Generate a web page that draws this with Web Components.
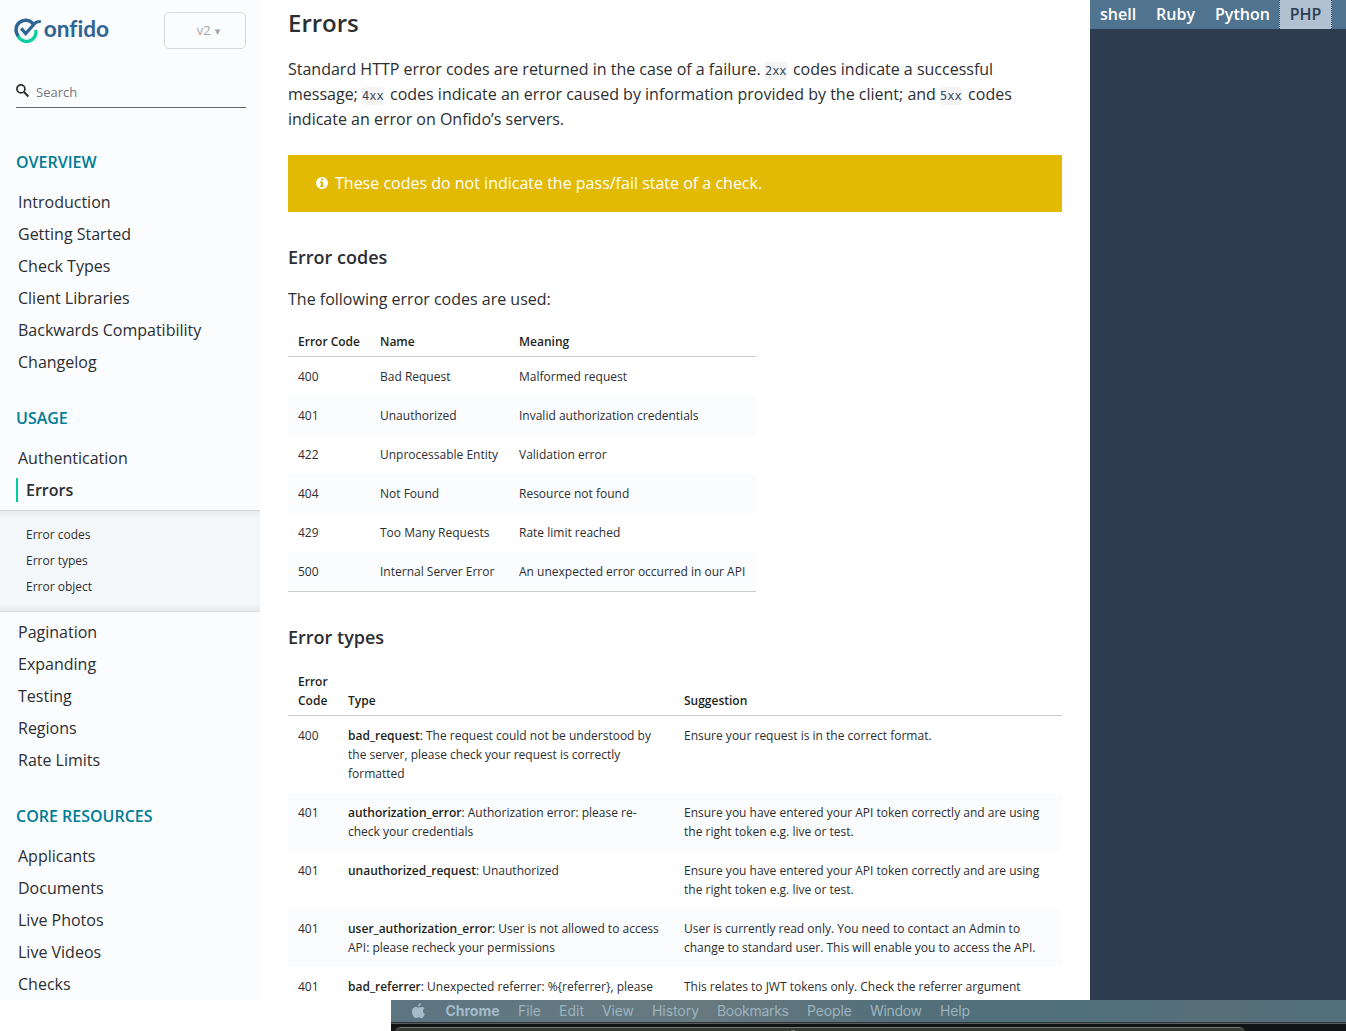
<!DOCTYPE html>
<html lang="en"><head><meta charset="utf-8"><title>Onfido API</title>
<style>
html,body{margin:0;height:1031px;overflow:hidden;background:#fff}
body{font-family:"Open Sans",sans-serif;color:#2c2e31}
</style></head><body>
<api-docs></api-docs>
<script>
const define=(name,html,after)=>customElements.define(name,class extends HTMLElement{
  constructor(){super();this.attachShadow({mode:'open'});}
  connectedCallback(){this.shadowRoot.innerHTML=typeof html==='function'?html(this):html;if(after)after(this);}
});

define('brand-logo',`<style>:host{display:block;width:100px;height:32px}svg{display:block;overflow:visible}</style>
<svg width="100" height="32" viewBox="0 0 100 32"><g fill="none" stroke-width="3.400">
<path d="M3.500 19A9.500 9.500 0 0 0 21.800 14" stroke="#0bcda2"/>
<path d="M18.900 7.700A9.500 9.500 0 1 0 4.200 19.800" stroke="#2f6592"/>
<path d="M7.200 12.400l4.500 5.200L21 7.100Q22.600 5.500 26.800 5.500" stroke="#2f6592" stroke-width="3.200"/></g>
<text x="29.700" y="21" textLength="65.300" lengthAdjust="spacingAndGlyphs" font-family="Lato" font-weight="700" font-size="22" fill="#2f6592" style="font-variant-ligatures:none;line-height:30px">onfido</text></svg>`);

define('version-picker',`<style>:host{display:flex;box-sizing:border-box;width:82px;height:37px;border:1px solid #d9dadd;border-radius:5px;align-items:center;justify-content:center;color:#a5a8ab;font-size:13px;padding:0 0 1px 7px}span{font:11px "DejaVu Sans";margin:2px 0 0 4px}</style><slot></slot><span>▾</span>`);

define('search-field',`<style>:host{display:flex;box-sizing:border-box;width:230px;height:34px;margin:25px 0 0 16px;border-bottom:1px solid #626468;color:#737679;font-size:13px;line-height:18px;padding-top:9px}svg{flex:none;margin:1px 6px 0 0}</style>
<svg width="14" height="14" viewBox="0 0 14 14" fill="none" stroke="#2c2e31"><circle cx="4.9" cy="4.9" r="4" stroke-width="1.7"/><path d="M8 8l4.400 4.400" stroke-width="2.100"/></svg><slot></slot>`);

define('nav-heading',`<style>:host{display:block;box-sizing:border-box;height:64px;padding:28px 0 0 16px;line-height:24px;font-size:16px;font-weight:600;color:#007c95;white-space:nowrap}</style><slot></slot>`);
define('nav-item',`<style>:host{display:block;height:32px;line-height:32px;padding-left:18px;font-size:16px;white-space:nowrap}
:host([active]){padding:4px 0 4px 16px;height:24px;line-height:24px;font-weight:600}:host([active]) span{display:block;border-left:2px solid #00cda0;padding-left:8px}</style><span><slot></slot></span>`);
define('sub-nav',el=>`<style>:host{display:block;box-sizing:border-box;height:102px;margin:4px 0;padding-top:11px;border-top:1px solid #d2d6d9;border-bottom:1px solid #dadee0;background:linear-gradient(#e5eaed,#f3f7fa 7px,#f3f7fa 93px,#e6eaed)}div{height:26px;line-height:26px;font-size:12px;padding-left:26px}</style>${el.getAttribute('items').split('|').map(t=>`<div>${t}</div>`).join('')}`);

const groups=[['OVERVIEW','Introduction','Getting Started','Check Types','Client Libraries','Backwards Compatibility','Changelog'],
['USAGE','Authentication','*Errors','Pagination','Expanding','Testing','Regions','Rate Limits'],
['CORE RESOURCES','Applicants','Documents','Live Photos','Live Videos','Checks']];
define('side-bar',()=>`<style>:host{display:block;width:260px;height:1000px;overflow:hidden;background:#fafcfe;flex:none}header{display:flex;justify-content:space-between;align-items:flex-start;height:37px;padding:12px 14px 0 14px}brand-logo{margin-top:4px}nav{margin-top:14px}</style>
<header><brand-logo></brand-logo><version-picker>v2</version-picker></header><search-field>Search</search-field><nav>${groups.map(g=>`<nav-heading>${g[0]}</nav-heading>`+g.slice(1).map(t=>t[0]==='*'?`<nav-item active>${t.slice(1)}</nav-item><sub-nav items="Error codes|Error types|Error object"></sub-nav>`:`<nav-item>${t}</nav-item>`).join('')).join('')}</nav>`);

define('notice-bar',`<style>:host{display:flex;box-sizing:border-box;align-items:center;height:57px;padding:0 0 2px 28px;background:#e2ba03;color:#fff;font-size:16px;margin-top:24px}svg{margin-right:7px}</style>
<svg width="12" height="12" viewBox="0 0 12 12"><circle cx="6" cy="6" r="6" fill="#fff"/><path d="M5 1.600h2v1.700H5zM4 4.600h3v3.800h1V10H4V8.400h1V6H4z" fill="#e2ba03"/></svg><span><slot></slot></span>`);

define('inline-code',`<style>:host{display:inline-block;background:#f4f4f5;border-radius:3px;font:12px/18px "DejaVu Sans Mono",monospace;color:#34495e;height:18px;padding:0;margin:0 2.200px 0 0}</style><slot></slot>`);

const data={codes:{w:[82,139,247],h:['Error Code','Name','Meaning'],r:[['400','Bad Request','Malformed request'],['401','Unauthorized','Invalid authorization credentials'],['422','Unprocessable Entity','Validation error'],['404','Not Found','Resource not found'],['429','Too Many Requests','Rate limit reached'],['500','Internal Server Error','An unexpected error occurred in our API']]},
types:{w:[50,336,388],h:['Error<br>Code','Type','Suggestion'],r:[
['400','<b>bad_request</b>: The request could not be understood by<br>the server, please check your request is correctly<br>formatted','Ensure your request is in the correct format.'],
['401','<b>authorization_error</b>: Authorization error: please re-<br>check your credentials','Ensure you have entered your API token correctly and are using<br>the right token e.g. live or test.'],
['401','<b>unauthorized_request</b>: Unauthorized','Ensure you have entered your API token correctly and are using<br>the right token e.g. live or test.'],
['401','<b>user_authorization_error</b>: User is not allowed to access<br>API: please recheck your permissions','User is currently read only. You need to contact an Admin to<br>change to standard user. This will enable you to access the API.'],
['401','<b>bad_referrer</b>: Unexpected referrer: %{referrer}, please','This relates to JWT tokens only. Check the referrer argument']]}};
define('data-table',el=>{const d=data[el.getAttribute('source')];return `<style>:host{display:block}table{border-collapse:separate;border-spacing:0;table-layout:fixed;width:${d.w.reduce((a,b)=>a+b)}px;font-size:12px;line-height:19px;border-bottom:1px solid #c8cacc}
th{font-weight:600;color:#1d1f21;text-align:left;vertical-align:bottom;padding:5px 0 5px 10px;border-bottom:1px solid #c8cacc}td{padding:10px 0 10px 10px;vertical-align:top;white-space:nowrap}tbody tr:nth-child(even){background:#fafcfe}b{font-weight:600;color:#1d1f21}</style>
<table><colgroup>${d.w.map(w=>`<col style="width:${w}px">`).join('')}</colgroup><thead><tr>${d.h.map(h=>`<th>${h}</th>`).join('')}</tr></thead><tbody>${d.r.map(r=>`<tr>${r.map(c=>`<td>${c}</td>`).join('')}</tr>`).join('')}</tbody></table>`});

define('doc-content',`<style>:host{display:block;box-sizing:border-box;width:830px;height:1000px;overflow:hidden;padding:0 28px;background:#fff;flex:none}
h1{font-size:24px;line-height:32px;font-weight:600;margin:7px 0 18px}h2{font-size:18px;line-height:26px;font-weight:600;margin:0}p{font-size:16px;line-height:25px;margin:0;white-space:nowrap}p.intro{height:74px}</style>
<h1>Errors</h1><p class="intro">Standard HTTP error codes are returned in the case of a failure. <inline-code>2xx</inline-code> codes indicate a successful<br>message; <inline-code>4xx</inline-code> codes indicate an error caused by information provided by the client; and <inline-code>5xx</inline-code> codes<br>indicate an error on Onfido’s servers.</p>
<notice-bar>These codes do not indicate the pass/fail state of a check.</notice-bar>
<h2 style="margin-top:32px">Error codes</h2><p style="margin:17px 0 15px">The following error codes are used:</p><data-table source="codes"></data-table>
<h2 style="margin:32px 0 17px">Error types</h2><data-table source="types"></data-table>`);

define('lang-tabs',`<style>:host{display:flex;height:29px;background:#50738f;color:#fff;font-size:16px;font-weight:600;line-height:28px}span{padding:0 10px;white-space:nowrap;flex:none}.on{background:#b1c1d2;color:#2c3e50;padding:0 10px 0 9.600px;margin-left:-.7px;border:dotted #2c3e50;border-width:0 1px}</style><span>shell</span><span>Ruby</span><span>Python</span><span class="on">PHP</span>`);
define('code-panel',`<style>:host{display:block;width:256px;height:1000px;background:#2d3d4f;flex:none}</style><lang-tabs></lang-tabs>`);

define('menu-strip',`<style>:host{display:block;height:31px;margin-left:391px;overflow:hidden;background:#111315}
nav{display:flex;height:22px;align-items:center;padding-left:21px;background:linear-gradient(90deg,#5d7581,#647981 20%,#68797f 33%,#536f7a 53%,#50707c 72%,#576f79 85%,#526f7a);font:14px/22px Inter,sans-serif;color:#9db3bf;white-space:nowrap}
svg{flex:none;margin-right:20px}text{font-size:14px}
.edge{height:2px;background:linear-gradient(#303436 50%,#555b5e 50%);border-radius:4px 0 0 0}
.win{box-sizing:border-box;height:10px;width:850px;margin:3px 0 0 4px;background:#383b34;border-top:1px solid #777970;border-radius:6px 6px 0 0;padding-left:395px}.dot{width:6px;height:3px;border-radius:4px 4px 0 0;margin-top:2px;background:#777970}</style>
<nav><svg width="13" height="16" viewBox="0 0 13 16"><path fill="#a5bbc9" d="M8.900 0C7.200.4 6.100 1.700 6.300 3.600 7.900 3.400 9 2 8.900 0ZM6.600 4.600C5.800 4.600 4.900 4 3.700 4 1.600 4 0 5.800 0 8.400c0 3.200 2 6.700 3.800 6.700 1 0 1.500-.6 2.800-.6 1.200 0 1.600.6 2.700.6 1.600 0 2.900-2.300 3.600-4.100-2.600-1.200-2.500-4.600-.2-5.800C11.900 4.300 10.800 4 9.700 4 8.300 4 7.500 4.600 6.600 4.600Z"/></svg>
<svg width="550" height="22" fill="#9db3bf" style="margin:0"><g font-family="Inter"><text x="0.500" y="16" textLength="54" font-weight="700" fill="#a5bbc9">Chrome</text><text x="73" y="16" textLength="23">File</text><text x="114" y="16" textLength="25">Edit</text><text x="157" y="16" textLength="32">View</text><text x="207" y="16" textLength="47">History</text><text x="272" y="16" textLength="72">Bookmarks</text><text x="362" y="16" textLength="45">People</text><text x="425" y="16" textLength="52">Window</text><text x="495" y="16" textLength="30">Help</text></g></svg></nav>
<div class="edge"></div><div class="win"><div class="dot"></div></div>`);
define('api-docs',`<style>:host{display:block;width:1346px}main{display:flex;height:1000px}</style><main><side-bar></side-bar><doc-content></doc-content><code-panel></code-panel></main><menu-strip></menu-strip>`);
</script></body></html>
